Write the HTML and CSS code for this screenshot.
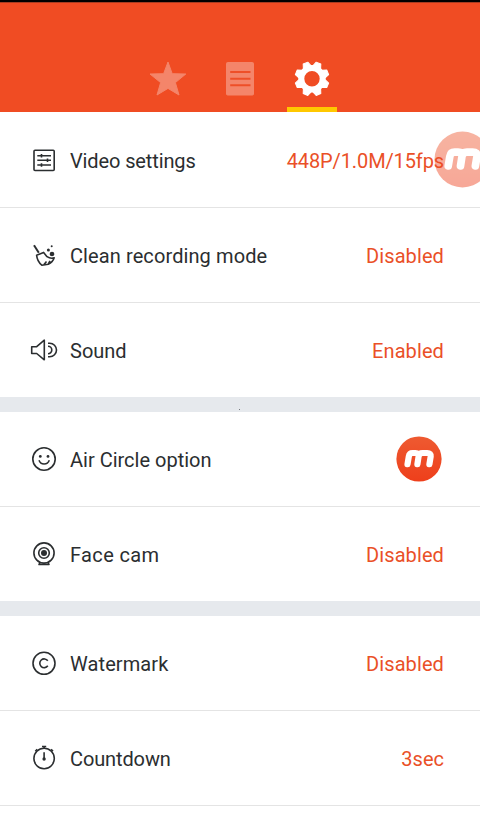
FILE: index.html
```html
<!DOCTYPE html>
<html lang="en">
<head>
<meta charset="utf-8">
<title>Settings</title>
<link rel="stylesheet" href="styles.css">
</head>
<body>
<svg class="defs" width="0" height="0" aria-hidden="true">
  <defs>
    <linearGradient id="ember" x1="0" y1="0" x2="0" y2="1">
      <stop offset="0" stop-color="#ee5a31"/>
      <stop offset="1" stop-color="#ee3f1b"/>
    </linearGradient>
    <symbol id="logo" viewBox="0 0 46 46">
      <circle cx="23" cy="23" r="22.6" fill="url(#ember)"/>
      <path d="M11.5 28.2 L12.8 20.4 Q13.4 17 16.6 17 H19.5 Q22.9 17 22.6 20.4 L21.4 28.2 M22.6 20.4 Q23.2 17 26.6 17 H31.2 Q35.2 17 34.7 20.4 L33.4 28.2" fill="none" stroke="#fff" stroke-width="6.2" stroke-linecap="round" stroke-linejoin="round"/>
    </symbol>
  </defs>
</svg>
<header class="header">
  <nav class="tabs">
    <a class="tab"><svg width="40" height="40" viewBox="0 0 40 40"><path class="dim" d="M20 4 L24.2 15.7 L37.8 16 L27.4 24.6 L31 37 L20 30.4 L9 37 L12.6 24.6 L2 16 L15.6 15.7 Z"/></svg></a>
    <a class="tab"><svg width="40" height="40" viewBox="0 0 40 40"><rect class="dim" x="6.5" y="4.5" width="27" height="32.5" rx="1"/><path class="rules" d="M10.2 14H30.5M10.2 20.7H30.5M10.2 27.3H30.5"/></svg></a>
    <a class="tab active"><svg width="40" height="40" viewBox="0 0 40 40"><g class="gear" transform="translate(20 20.8)"><circle r="10.7" fill="none" stroke-width="6"/><g id="half"><path id="tooth" d="M-4.2 -12.4 L-2.5 -17 H2.5 L4.2 -12.4Z" transform="rotate(22.5)"/><use href="#tooth" transform="rotate(45)"/><use href="#tooth" transform="rotate(90)"/><use href="#tooth" transform="rotate(135)"/></g><use href="#half" transform="rotate(180)"/></g></svg></a>
  </nav>
</header>
<main>
  <section class="group">
    <div class="row first">
      <svg class="icon" viewBox="0 0 30 30"><rect x="5" y="5.3" width="20.2" height="20.2" rx="1"/><path d="M8.3 10.7H22M8.3 15.3H22M8.3 20H22M12.5 8.9V12.5M18.5 13.5V17.1M12.5 18.2V21.8"/></svg>
      <span class="label snug">Video settings</span><span class="value snug">448P/1.0M/15fps</span>
      <svg class="floating"><use href="#logo"/></svg>
    </div>
    <div class="row">
      <svg class="icon" viewBox="0 0 30 30"><path d="M5 5.3L9.8 12.7" stroke-width="2"/><path d="M7.6 15.2L14.6 12.4L18 16.7Q21.5 19 25.2 17.8Q23.7 22.4 19.3 24.2L12.8 25.2Q8.2 21.5 7.6 15.2ZM15 24.6L17.5 21.5M19.3 24L21 20.8"/><g class="solid"><circle cx="23" cy="14" r="2.3"/><circle cx="19.4" cy="10" r="1.5"/><circle cx="22.7" cy="6.3" r="1"/></g></svg>
      <span class="label loose">Clean recording mode</span><span class="value loose">Disabled</span>
    </div>
    <div class="row">
      <svg class="icon" viewBox="0 0 30 30"><path d="M2.7 11.7H7.7L15.3 5.2V24.8L7.7 18.5H2.7ZM19 11.2A3.8 3.8 0 0 1 19 18.8M19 8.2H20.7A6.8 6.8 0 0 1 20.7 21.8H19"/></svg>
      <span class="label">Sound</span><span class="value loose">Enabled</span>
    </div>
  </section>
  <section class="group speck">
    <div class="row">
      <svg class="icon" viewBox="0 0 30 30"><circle cx="15" cy="15" r="11.2"/><path d="M10 16.3Q11.3 20 15.1 20T20.3 16.3"/><g class="solid"><circle cx="11.3" cy="12.4" r="1.4"/><circle cx="19" cy="12.4" r="1.4"/></g></svg>
      <span class="label">Air Circle option</span><svg class="badge"><use href="#logo"/></svg>
    </div>
    <div class="row">
      <svg class="icon" viewBox="0 0 30 30"><circle cx="15" cy="14" r="10.1"/><circle cx="15" cy="14" r="5.3"/><circle class="solid" cx="15" cy="14" r="3"/><path d="M11 23.4L10 25.5H20L19 23.4"/></svg>
      <span class="label looser">Face cam</span><span class="value loose">Disabled</span>
    </div>
  </section>
  <section class="group">
    <div class="row">
      <svg class="icon" viewBox="0 0 30 30"><circle cx="15" cy="15.3" r="11"/><path d="M18.8 12.8A4.4 4.4 0 1 0 18.8 17.8"/></svg>
      <span class="label loose">Watermark</span><span class="value loose">Disabled</span>
    </div>
    <div class="row">
      <svg class="icon" viewBox="0 0 30 30"><circle cx="15.1" cy="15.5" r="10.2"/><path d="M13 3.5H17.2M15.1 3.5V5.3M6.3 8.2L8.2 6.3M24 8.2L22 6.3M15.1 9.3V16"/><circle class="solid" cx="15.1" cy="16" r="1.7"/></svg>
      <span class="label snug">Countdown</span><span class="value">3sec</span>
    </div>
  </section>
</main>
</body>
</html>
```
FILE: styles.css
```css
* {
  box-sizing: border-box;
}

body {
  margin: 0;
  height: 818px;
  overflow: hidden;
  background: #fff;
  color: #2b2e30;
  font: 20px/24px Roboto, "Liberation Sans", sans-serif;
}

.defs {
  position: absolute;
}

.header {
  height: 112px;
  padding-top: 56px;
  border-top: 2px solid #000;
  background: #f04c23;
  box-shadow: inset 0 1px #a83c20;
}

.tabs {
  display: flex;
  justify-content: center;
  gap: 22px;
  height: 54px;
}

.tab {
  display: flex;
  justify-content: center;
  width: 50px;
  height: 54px;
}

.active {
  border-bottom: 5px solid #ffc800;
}

.dim {
  fill: #f4856a;
  stroke: #f4856a;
  stroke-linejoin: round;
}

.rules {
  stroke: #ee4f28;
  stroke-width: 2;
}

.gear {
  fill: #fff;
  stroke: #fff;
  stroke-linejoin: round;
}

.group + .group {
  border-top: 15px solid #e6e9ed;
}

.speck {
  position: relative;
}

.speck::before {
  content: "";
  position: absolute;
  top: -3px;
  left: 239px;
  width: 1px;
  height: 1px;
  background: #777b80;
}

.row {
  position: relative;
  display: flex;
  align-items: center;
  height: 95px;
  padding: 0 36px 0 29px;
  border-bottom: 1px solid #e4e4e4;
}

.row.first {
  height: 96px;
}

.group:not(:last-child) .row:last-child {
  height: 94px;
  border-bottom: 0;
}

.icon {
  width: 30px;
  height: 30px;
  margin-right: 11px;
  fill: none;
  stroke: #2b2e30;
  stroke-width: 1.6;
  stroke-linejoin: round;
}

.icon .solid {
  fill: #2b2e30;
  stroke: none;
}

.label {
  padding-top: 2px;
}

.value {
  margin-left: auto;
  padding-top: 2px;
  color: #ea5027;
}

.snug {
  letter-spacing: -0.12px;
}

.loose {
  letter-spacing: 0.1px;
}

.looser {
  letter-spacing: 0.36px;
}

.badge {
  width: 46px;
  height: 46px;
  margin: 0 2px 0 auto;
}

.floating {
  position: absolute;
  top: 19px;
  left: 434px;
  width: 57px;
  height: 57px;
  opacity: .45;
}
```
